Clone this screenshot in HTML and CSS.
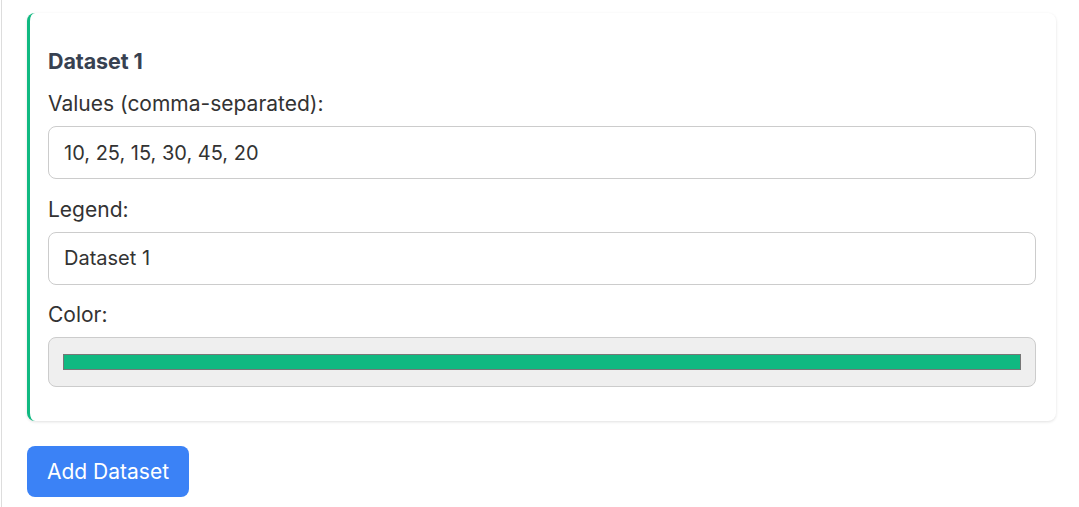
FILE: index.html
```html
<!DOCTYPE html>
<html lang="en">
<head>
<meta charset="UTF-8">
<title>Datasets</title>
<link rel="stylesheet" href="styles.css">
</head>
<body>
<div class="panel">

  <div class="dataset">
    <h3 class="dataset-title">Dataset 1</h3>

    <div class="field">
      <label for="values1">Values (comma-separated):</label>
      <input type="text" id="values1" value="10, 25, 15, 30, 45, 20">
    </div>

    <div class="field">
      <label for="legend1">Legend:</label>
      <input type="text" id="legend1" value="Dataset 1">
    </div>

    <div class="field">
      <label for="color1">Color:</label>
      <input type="color" id="color1" value="#10b981">
    </div>
  </div>

  <button class="add-btn" type="button">Add Dataset</button>

</div>
</body>
</html>
```

FILE: styles.css
```css
body {
  margin: 0;
  font-family: "Inter", "Noto Sans", sans-serif;
  color: #333;
  background: #fff;
}

.panel {
  margin-left: 1px;
  border-left: 1px solid #ddd;
  padding: 13px 23px 10px 25px;
  min-height: 484px;
}

.dataset {
  background: #fff;
  border-left: 3px solid #10b981;
  border-radius: 8px;
  box-shadow: 0 1px 3px rgba(0, 0, 0, 0.12);
  padding: 18px 20px 16px 18px;
}

.dataset-title {
  margin: 16px 0 17px;
  font-size: 21.5px;
  line-height: 28px;
  font-weight: 700;
  color: #374151;
  letter-spacing: -0.1px;
}

.field { margin-bottom: 18.5px; }

.field label {
  display: block;
  font-size: 21px;
  line-height: 24px;
  margin-bottom: 10px;
}

.field input {
  display: block;
  box-sizing: border-box;
  width: 100%;
  height: 53px;
  border: 1px solid #ccc;
  border-radius: 8px;
  padding: 0 15px;
  font-family: inherit;
  font-size: 20px;
  color: #333;
  background: #fff;
}

.field input[type="color"] {
  height: 49.5px;
  padding: 12px;
  background: #efefef;
  cursor: pointer;
}

.add-btn {
  margin-top: 25px;
  width: 162px;
  height: 51px;
  border: 0;
  border-radius: 8px;
  background: #3b82f6;
  color: #fff;
  font-family: inherit;
  font-size: 21px;
  cursor: pointer;
}
```
